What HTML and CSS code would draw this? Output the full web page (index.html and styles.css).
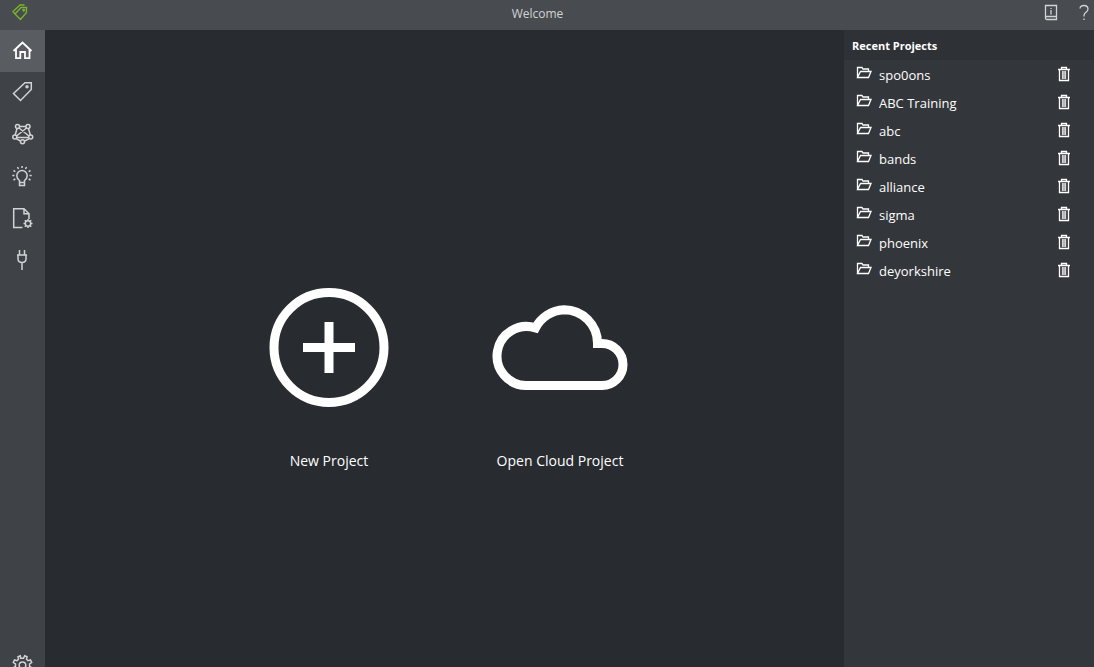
FILE: index.html
```html
<!DOCTYPE html>
<html lang="en">
<head>
<meta charset="utf-8">
<meta name="viewport" content="width=device-width, initial-scale=1">
<title>Welcome</title>
<link rel="stylesheet" href="styles.css">
</head>
<body>
<svg class="sprite" aria-hidden="true">
  <symbol id="folder" viewBox="0 0 16 14">
    <path d="M1.500 12.500V2.500H6L7 4H12.500V6.500M1.500 12.500L4.500 6.500H15L12.500 12.500Z"/>
  </symbol>
  <symbol id="trash" viewBox="0 0 14 16">
    <path d="M1 3.500H13M4.500 3V1.500H9.500V3M2.500 4V14.500H11.500V4"/>
    <path d="M5.500 5V13M7 5V13M8.500 5V13" opacity=".8"/>
  </symbol>
</svg>

<header class="topbar">
  <a class="logo" href="#" aria-label="Start page">
    <svg class="line" width="18" height="18" viewBox="0 0 18 18"><path d="M10 4.500H15.500V9.500L9.500 16.500L4 11ZM13.500 2H9L2 8.500L4 11"/><circle cx="12.700" cy="7.300" r=".8"/></svg>
  </a>
  <h1 class="title">Welcome</h1>
  <div class="actions">
    <button type="button" aria-label="Documentation">
      <svg class="line" width="15" height="17" viewBox="0 0 15 17"><path d="M1.500 13.500V1.500H12.500V15.500H3Q1.500 15.500 1.500 14V13.500Q1.500 12.500 3 12.500H12.500M7 4V5M7 6V10.500"/></svg>
    </button>
    <button type="button" aria-label="Help">
      <svg class="line" width="12" height="17" viewBox="0 0 12 17"><path d="M2 4.500Q2.300 1.500 6 1.500T10 5Q10 6.800 8 8.300T6 11.500V12.500M6 14.500V16"/></svg>
    </button>
  </div>
</header>

<div class="body">
  <nav class="sidebar" aria-label="Main">
    <button type="button" class="nav-item active" aria-label="Home">
      <svg class="line" width="23" height="24" viewBox="0 0 23 24"><path d="M2.500 12L11.500 3.500L20.500 12M5 10.500V19.200H9.300V13H14V19.200H18.500V10.500"/></svg>
    </button>
    <button type="button" class="nav-item" aria-label="Tags">
      <svg class="line" width="23" height="24" viewBox="0 0 23 24"><path d="M14 1.700H20.300V8.500L9.500 19.500L2.500 12.500Z"/><circle cx="16" cy="5.800" r="1"/></svg>
    </button>
    <button type="button" class="nav-item" aria-label="Relations">
      <svg class="line" width="23" height="24" viewBox="0 0 23 24"><path d="M8.500 3.500H15M6 5.500L4.200 12M17.500 5.500L19.300 12M8 5L18 13M15.500 5L5.500 13M6 14.500H17.500M5.500 15.800L9.500 18M18 15.800L13.500 18"/><circle cx="6.500" cy="3.500" r="2"/><circle cx="17" cy="3.500" r="2"/><circle cx="3.800" cy="14" r="2"/><circle cx="19.700" cy="14" r="2"/><circle cx="11.500" cy="18.700" r="2"/></svg>
    </button>
    <button type="button" class="nav-item" aria-label="Insights">
      <svg class="line" width="23" height="24" viewBox="0 0 23 24"><path d="M8.500 17.500V15.500Q5.800 13.500 5.800 10.700A5.200 5.200 0 0 1 16.200 10.700Q16.200 13.500 13.500 15.500V17.500ZM8.500 17.500V20.500H13.500V17.500M11 1V3M6.500 2L7.500 4M15.500 2L14.500 4M2.500 5.500L4.300 6.600M19.500 5.500L17.700 6.600M1.300 10.500H3.500M18.500 10.500H20.700M2.500 15L4.300 14M19.500 15L17.700 14"/></svg>
    </button>
    <button type="button" class="nav-item" aria-label="Document settings">
      <svg class="line" width="23" height="24" viewBox="0 0 23 24"><path d="M11.500 20.500H2.700V1.700H13L18 6.700V12M13 1.700V6.700H18"/><circle cx="17" cy="16.500" r="2.700"/><path d="M17 12V13.500M17 19.500V21M12.500 16.500H14M20 16.500H21.500M13.800 13.300L14.900 14.400M19.100 18.600L20.200 19.700M20.200 13.300L19.100 14.400M14.900 18.600L13.800 19.700"/></svg>
    </button>
    <button type="button" class="nav-item" aria-label="Connections">
      <svg class="line" width="23" height="24" viewBox="0 0 23 24"><path d="M6 6H16M7 6V9.500Q7 13.500 11 13.500T15 9.500V6M8.500 6V1M13.500 6V1M11 13.500V21"/></svg>
    </button>
    <button type="button" class="nav-item settings" aria-label="Settings">
      <svg class="line" width="23" height="24" viewBox="0 0 23 24"><path d="M9.700 5.300L9.300 2.800L7 3.700L7.500 6.300L6 7.700L3.500 7L2.300 9.500L4.500 11V13.300L2.300 14.700L3.500 17L6 16.500L7.500 18L7 20.500L9.300 21.500L10.500 19.300H12.500L13.700 21.500L16 20.500L15.500 18L17 16.500L19.500 17L20.700 14.700L18.500 13.300V11L20.700 9.500L19.500 7L17 7.700L15.500 6.300L16 3.700L13.700 2.800L12.500 5.300Z"/><circle cx="11.500" cy="12.200" r="3.300"/></svg>
    </button>
  </nav>

  <main class="start">
    <button type="button" class="tile">
      <svg width="136" height="120" viewBox="0 0 136 120"><circle cx="68" cy="59.500" r="55"/><path d="M68 34V85M42 59.500H94"/></svg>
      <span>New Project</span>
    </button>
    <button type="button" class="tile">
      <svg width="136" height="120" viewBox="0 -17 136 120"><path d="M110 38.500A21 21 0 0 1 110 80.500H34A29.500 29.500 0 1 1 43.500 22.900A33.500 33.500 0 0 1 72 4.700A33.500 33.500 0 0 1 105.500 38.500Z"/></svg>
      <span>Open Cloud Project</span>
    </button>
  </main>

  <aside class="recent">
    <h2>Recent Projects</h2>
    <ul>
      <li><a href="#"><svg class="line" width="16" height="14"><use href="#folder"/></svg><span>spo0ons</span></a><button type="button" aria-label="Delete spo0ons"><svg class="line" width="14" height="16"><use href="#trash"/></svg></button></li>
      <li><a href="#"><svg class="line" width="16" height="14"><use href="#folder"/></svg><span>ABC Training</span></a><button type="button" aria-label="Delete ABC Training"><svg class="line" width="14" height="16"><use href="#trash"/></svg></button></li>
      <li><a href="#"><svg class="line" width="16" height="14"><use href="#folder"/></svg><span>abc</span></a><button type="button" aria-label="Delete abc"><svg class="line" width="14" height="16"><use href="#trash"/></svg></button></li>
      <li><a href="#"><svg class="line" width="16" height="14"><use href="#folder"/></svg><span>bands</span></a><button type="button" aria-label="Delete bands"><svg class="line" width="14" height="16"><use href="#trash"/></svg></button></li>
      <li><a href="#"><svg class="line" width="16" height="14"><use href="#folder"/></svg><span>alliance</span></a><button type="button" aria-label="Delete alliance"><svg class="line" width="14" height="16"><use href="#trash"/></svg></button></li>
      <li><a href="#"><svg class="line" width="16" height="14"><use href="#folder"/></svg><span>sigma</span></a><button type="button" aria-label="Delete sigma"><svg class="line" width="14" height="16"><use href="#trash"/></svg></button></li>
      <li><a href="#"><svg class="line" width="16" height="14"><use href="#folder"/></svg><span>phoenix</span></a><button type="button" aria-label="Delete phoenix"><svg class="line" width="14" height="16"><use href="#trash"/></svg></button></li>
      <li><a href="#"><svg class="line" width="16" height="14"><use href="#folder"/></svg><span>deyorkshire</span></a><button type="button" aria-label="Delete deyorkshire"><svg class="line" width="14" height="16"><use href="#trash"/></svg></button></li>
    </ul>
  </aside>
</div>
</body>
</html>
```

FILE: styles.css
```css
* { box-sizing: border-box; }

body {
  margin: 0;
  height: 100vh;
  display: flex;
  flex-direction: column;
  overflow: hidden;
  background: #282b2f;
  color: #fff;
  font: 13px/20px "Open Sans", "Noto Sans", sans-serif;
}

button {
  margin: 0;
  padding: 0;
  border: 0;
  background: none;
  color: inherit;
  font: inherit;
  cursor: pointer;
}

svg { display: block; flex: none; }

.sprite { position: absolute; width: 0; height: 0; }

.line {
  fill: none;
  stroke: currentColor;
  stroke-width: 1.3;
}

.topbar {
  flex: none;
  height: 30px;
  display: flex;
  background: #484b4f;
  color: #d2d3d4;
}

.logo {
  width: 45px;
  padding: 3px 0 0 11px;
  color: #76b82a;
}

.title {
  flex: 1;
  margin: 0;
  padding-top: 4px;
  text-align: center;
  font-size: 12px;
  font-weight: 400;
}

.actions {
  display: flex;
  align-items: flex-start;
  gap: 19px;
  width: 64px;
  padding: 4px 0 0 14px;
}

.body {
  flex: 1;
  min-height: 0;
  display: flex;
}

.sidebar {
  flex: none;
  width: 45px;
  display: flex;
  flex-direction: column;
  background: #3f4246;
  color: #d2d3d4;
}

.sidebar .line { stroke-width: 1.5; }

.nav-item {
  flex: none;
  height: 42px;
  display: grid;
  place-items: center;
}

.nav-item.active {
  background: #595c60;
  color: #fff;
}

.nav-item.active .line { stroke-width: 1.8; }

.nav-item.settings {
  margin-top: auto;
  margin-bottom: -19px;
}

.start {
  flex: 1;
  display: flex;
  align-items: center;
  justify-content: center;
  gap: 95px;
  padding-top: 62px;
}

.tile {
  width: 136px;
  display: flex;
  flex-direction: column;
  align-items: center;
  gap: 43px;
  font-size: 14px;
  white-space: nowrap;
}

.tile svg {
  fill: none;
  stroke: #fff;
  stroke-width: 9;
}

.recent {
  flex: none;
  width: 250px;
  background: #33363a;
}

.recent h2 {
  margin: 0;
  padding: 6px 8px 4px;
  background: #2e3135;
  font-size: 11px;
  font-weight: 700;
}

.recent ul {
  margin: 0;
  padding: 1px 23px 0 12px;
  list-style: none;
}

.recent li {
  display: flex;
  align-items: center;
  height: 28px;
}

.recent li button { padding-bottom: 3px; }

.recent a {
  flex: 1;
  display: flex;
  gap: 7px;
  color: inherit;
  text-decoration: none;
}
```
